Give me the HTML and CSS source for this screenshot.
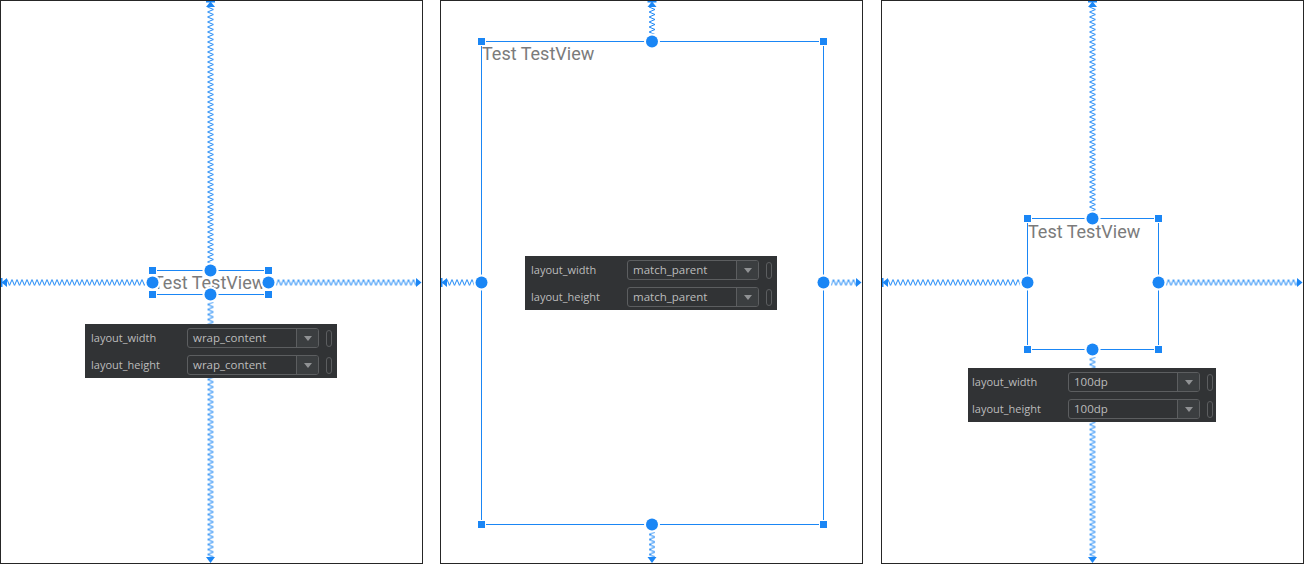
FILE: index.html
```html
<!DOCTYPE html>
<html lang="en">
<head>
<meta charset="utf-8">
<title>Layout width / height</title>
<link rel="stylesheet" href="styles.css">
</head>
<body>
<svg class="defs" width="0" height="0" aria-hidden="true">
  <defs>
    <pattern id="zigv" width="8" height="5" patternUnits="userSpaceOnUse">
      <path d="M1,0 L7,2.5 L1,5" fill="none" stroke="#1a86f5" stroke-width="1"/>
    </pattern>
    <pattern id="zigh" width="5" height="8" patternUnits="userSpaceOnUse">
      <path d="M0,1 L2.5,7 L5,1" fill="none" stroke="#1a86f5" stroke-width="1"/>
    </pattern>
  </defs>
</svg>

<main class="stage">
  <!-- wrap_content -->
  <section class="canvas">
    <div class="view-text text-wrap">Test TestView</div>
    <svg class="blueprint" width="423" height="564" viewBox="0 0 423 564">
      <g transform="translate(206.5,7)"><rect width="8" height="263.5" fill="url(#zigv)"/></g>
      <g transform="translate(206.5,294.5)"><rect width="8" height="262.5" fill="url(#zigv)"/></g>
      <g transform="translate(7,278.5)"><rect width="145.5" height="8" fill="url(#zigh)"/></g>
      <g transform="translate(268.5,278.5)"><rect width="147.5" height="8" fill="url(#zigh)"/></g>
      <g class="ink">
        <rect x="206" y="1" width="9" height="1.5"/><polygon points="210.5,1.5 215,7 206,7"/>
        <polygon points="206,557 215,557 210.5,563"/>
        <rect x="1" y="278" width="1.5" height="9"/><polygon points="1.5,282.5 7,278 7,287"/>
        <polygon points="421.5,282.5 416,278 416,287"/>
      </g>
      <rect class="box" x="152.5" y="270.5" width="116" height="24"/>
      <g class="halo">
        <circle cx="210.5" cy="270.5" r="8"/><circle cx="210.5" cy="294.5" r="8"/>
        <circle cx="152.5" cy="282.5" r="8"/><circle cx="268.5" cy="282.5" r="8"/>
        <rect x="148" y="266" width="9" height="9"/><rect x="264" y="266" width="9" height="9"/>
        <rect x="148" y="290" width="9" height="9"/><rect x="264" y="290" width="9" height="9"/>
      </g>
      <g class="ink">
        <circle cx="210.5" cy="270.5" r="6"/><circle cx="210.5" cy="294.5" r="6"/>
        <circle cx="152.5" cy="282.5" r="6"/><circle cx="268.5" cy="282.5" r="6"/>
        <rect x="149" y="267" width="7" height="7"/><rect x="265" y="267" width="7" height="7"/>
        <rect x="149" y="291" width="7" height="7"/><rect x="265" y="291" width="7" height="7"/>
      </g>
    </svg>
    <div class="props props-wrap">
      <div class="prop-row">
        <span class="prop-label">layout_width</span>
        <div class="combo"><span class="combo-value">wrap_content</span><span class="combo-btn"><i class="caret"></i></span></div>
        <span class="pill"></span>
      </div>
      <div class="prop-row">
        <span class="prop-label">layout_height</span>
        <div class="combo"><span class="combo-value">wrap_content</span><span class="combo-btn"><i class="caret"></i></span></div>
        <span class="pill"></span>
      </div>
    </div>
  </section>

  <!-- match_parent -->
  <section class="canvas">
    <div class="view-text text-match">Test TestView</div>
    <svg class="blueprint" width="423" height="564" viewBox="0 0 423 564">
      <g transform="translate(208,7)"><rect width="8" height="34.5" fill="url(#zigv)"/></g>
      <g transform="translate(208,524.5)"><rect width="8" height="32.5" fill="url(#zigv)"/></g>
      <g transform="translate(7,278.5)"><rect width="34.5" height="8" fill="url(#zigh)"/></g>
      <g transform="translate(383.5,278.5)"><rect width="32.5" height="8" fill="url(#zigh)"/></g>
      <g class="ink">
        <rect x="207.5" y="1" width="9" height="1.5"/><polygon points="212,1.5 216.5,7 207.5,7"/>
        <polygon points="207.5,557 216.5,557 212,563"/>
        <rect x="1" y="278" width="1.5" height="9"/><polygon points="1.5,282.5 7,278 7,287"/>
        <polygon points="421.5,282.5 416,278 416,287"/>
      </g>
      <rect class="box" x="41.5" y="41.5" width="342" height="483"/>
      <g class="halo">
        <circle cx="212" cy="41.5" r="8"/><circle cx="212" cy="524.5" r="8"/>
        <circle cx="41.5" cy="282.5" r="8"/><circle cx="383.5" cy="282.5" r="8"/>
        <rect x="37" y="37" width="9" height="9"/><rect x="379" y="37" width="9" height="9"/>
        <rect x="37" y="520" width="9" height="9"/><rect x="379" y="520" width="9" height="9"/>
      </g>
      <g class="ink">
        <circle cx="212" cy="41.5" r="6"/><circle cx="212" cy="524.5" r="6"/>
        <circle cx="41.5" cy="282.5" r="6"/><circle cx="383.5" cy="282.5" r="6"/>
        <rect x="38" y="38" width="7" height="7"/><rect x="380" y="38" width="7" height="7"/>
        <rect x="38" y="521" width="7" height="7"/><rect x="380" y="521" width="7" height="7"/>
      </g>
    </svg>
    <div class="props props-match">
      <div class="prop-row">
        <span class="prop-label">layout_width</span>
        <div class="combo"><span class="combo-value">match_parent</span><span class="combo-btn"><i class="caret"></i></span></div>
        <span class="pill"></span>
      </div>
      <div class="prop-row">
        <span class="prop-label">layout_height</span>
        <div class="combo"><span class="combo-value">match_parent</span><span class="combo-btn"><i class="caret"></i></span></div>
        <span class="pill"></span>
      </div>
    </div>
  </section>

  <!-- 100dp -->
  <section class="canvas">
    <div class="view-text text-fixed">Test TestView</div>
    <svg class="blueprint" width="423" height="564" viewBox="0 0 423 564">
      <g transform="translate(207.5,7)"><rect width="8" height="211.5" fill="url(#zigv)"/></g>
      <g transform="translate(207.5,349.5)"><rect width="8" height="207.5" fill="url(#zigv)"/></g>
      <g transform="translate(7,278.5)"><rect width="139.5" height="8" fill="url(#zigh)"/></g>
      <g transform="translate(277.5,278.5)"><rect width="138.5" height="8" fill="url(#zigh)"/></g>
      <g class="ink">
        <rect x="207" y="1" width="9" height="1.5"/><polygon points="211.5,1.5 216,7 207,7"/>
        <polygon points="207,557 216,557 211.5,563"/>
        <rect x="1" y="278" width="1.5" height="9"/><polygon points="1.5,282.5 7,278 7,287"/>
        <polygon points="421.5,282.5 416,278 416,287"/>
      </g>
      <rect class="box" x="146.5" y="218.5" width="131" height="131"/>
      <g class="halo">
        <circle cx="211.5" cy="218.5" r="8"/><circle cx="211.5" cy="349.5" r="8"/>
        <circle cx="146.5" cy="282.5" r="8"/><circle cx="277.5" cy="282.5" r="8"/>
        <rect x="142" y="214" width="9" height="9"/><rect x="273" y="214" width="9" height="9"/>
        <rect x="142" y="345" width="9" height="9"/><rect x="273" y="345" width="9" height="9"/>
      </g>
      <g class="ink">
        <circle cx="211.5" cy="218.5" r="6"/><circle cx="211.5" cy="349.5" r="6"/>
        <circle cx="146.5" cy="282.5" r="6"/><circle cx="277.5" cy="282.5" r="6"/>
        <rect x="143" y="215" width="7" height="7"/><rect x="274" y="215" width="7" height="7"/>
        <rect x="143" y="346" width="7" height="7"/><rect x="274" y="346" width="7" height="7"/>
      </g>
    </svg>
    <div class="props props-fixed">
      <div class="prop-row">
        <span class="prop-label">layout_width</span>
        <div class="combo"><span class="combo-value">100dp</span><span class="combo-btn"><i class="caret"></i></span></div>
        <span class="pill"></span>
      </div>
      <div class="prop-row">
        <span class="prop-label">layout_height</span>
        <div class="combo"><span class="combo-value">100dp</span><span class="combo-btn"><i class="caret"></i></span></div>
        <span class="pill"></span>
      </div>
    </div>
  </section>
</main>
</body>
</html>
```

FILE: styles.css
```css
html, body {
  margin: 0;
  padding: 0;
  background: #ffffff;
}

.defs {
  position: absolute;
  width: 0;
  height: 0;
  overflow: hidden;
}

.stage {
  width: 1304px;
  height: 564px;
  display: flex;
  gap: 17px;
}

.canvas {
  position: relative;
  width: 423px;
  height: 564px;
  flex: none;
  background: #ffffff;
  box-shadow: inset 0 0 0 1px #262626;
  overflow: hidden;
}

.canvas:last-child {
  margin-left: auto;
}

.blueprint {
  position: absolute;
  left: 0;
  top: 0;
  display: block;
}

.blueprint .ink { fill: #1a86f5; }
.blueprint .halo { fill: #ffffff; }
.blueprint .box {
  fill: none;
  stroke: #1a86f5;
  stroke-width: 1;
}

.view-text {
  position: absolute;
  font-family: Roboto, "Liberation Sans", sans-serif;
  font-size: 18px;
  line-height: 20px;
  color: #7b7b7b;
  white-space: nowrap;
}

.text-wrap  { left: 153px; top: 273px; }
.text-match { left: 42px;  top: 44px; }
.text-fixed { left: 147px; top: 221.5px; }

.props {
  position: absolute;
  width: 252px;
  height: 54px;
  box-sizing: border-box;
  padding: 4px 0 0 6px;
  background: #313335;
  display: flex;
  flex-direction: column;
  gap: 7px;
  font-family: "Open Sans", "Noto Sans", sans-serif;
  color: #bcbcbc;
}

.props-wrap  { left: 85px; top: 324px; }
.props-match { left: 85px; top: 256px; }
.props-fixed { left: 87px; top: 368px; width: 248px; padding-left: 4px; }

.prop-row {
  display: flex;
  align-items: center;
  height: 20px;
}

.prop-label {
  width: 96px;
  flex: none;
  font-size: 11px;
  line-height: 20px;
  white-space: nowrap;
}

.combo {
  width: 132px;
  height: 20px;
  flex: none;
  box-sizing: border-box;
  border: 1px solid #5c5e60;
  border-radius: 3px;
  display: flex;
  overflow: hidden;
  background: #313335;
}

.combo-value {
  flex: 1;
  padding-left: 5px;
  font-size: 11.5px;
  line-height: 18px;
  white-space: nowrap;
}

.combo-btn {
  width: 21px;
  flex: none;
  border-left: 1px solid #5c5e60;
  background: #3b3e40;
  display: flex;
  align-items: center;
  justify-content: center;
}

.caret {
  display: block;
  width: 0;
  height: 0;
  border-left: 4px solid transparent;
  border-right: 4px solid transparent;
  border-top: 5px solid #909294;
}

.pill {
  margin-left: 7px;
  width: 6px;
  height: 17px;
  flex: none;
  box-sizing: border-box;
  border: 1px solid #5c5e60;
  border-radius: 3px;
}
```
